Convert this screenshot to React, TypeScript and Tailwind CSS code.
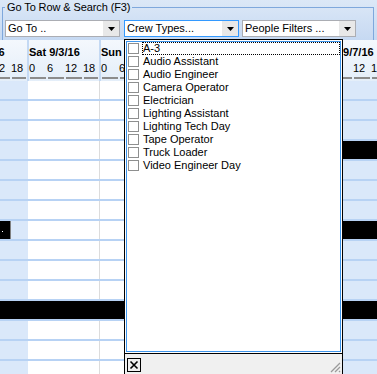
import React from "react";

const crewTypes = [
  "A-3",
  "Audio Assistant",
  "Audio Engineer",
  "Camera Operator",
  "Electrician",
  "Lighting Assistant",
  "Lighting Tech Day",
  "Tape Operator",
  "Truck Loader",
  "Video Engineer Day",
];

// visible days of the schedule, scrolled so Fri 9/2 is mostly off screen
const days = [
  { label: "Fri 9/2/16", body: "bg-[#dae8fa] border-l-[#dae8fa]", text: "" },
  { label: "Sat 9/3/16", body: "bg-white border-l-[#dae8fa]", text: "" },
  { label: "Sun 9/4/16", body: "bg-white border-l-[#dcdcdc]", text: "" },
  // Mon and Tue sit entirely under the open dropdown
  { label: "Mon 9/5/16", body: "bg-white border-l-[#dcdcdc]", text: "invisible" },
  { label: "Tue 9/6/16", body: "bg-white border-l-[#dcdcdc]", text: "invisible" },
  { label: "Wed 9/7/16", body: "bg-[#dae8fa] border-l-[#dcdcdc]", text: "" },
];

const hours = [
  { h: "0", w: "w-[18px]" },
  { h: "6", w: "w-[18px]" },
  { h: "12", w: "w-[18px]" },
  { h: "18", w: "w-[16px]" },
];

// which rows carry booked (black) blocks
const rows = Array.from({ length: 15 }, (_, i) => i);
const rightBars = [3, 7, 11];

function Arrow() {
  return (
    <svg width="7" height="4" viewBox="0 0 7 4">
      <polygon points="0,0 7,0 3.5,4" fill="#000" />
    </svg>
  );
}

function Combo({ text, className }: { text: string; className: string }) {
  return (
    <div className={`flex h-[17px] shrink-0 border bg-white ${className}`}>
      <span className="flex-1 truncate pl-[2px] text-[11px] leading-[15px] text-black">{text}</span>
      <span className="flex w-[16px] items-center justify-center bg-[#e8e8e8]">
        <Arrow />
      </span>
    </div>
  );
}

export default function App() {
  return (
    <div className="relative h-[374px] w-[377px] overflow-hidden bg-white font-['Liberation_Sans',Arial,sans-serif] text-black">
      {/* Search panel */}
      <div className="h-[40px] overflow-hidden bg-gradient-to-b from-[#dce8f7] to-[#c6d9f2]">
        <fieldset className="ml-[2px] h-[60px] w-[372px] border border-[#7fa8dc]">
          <legend className="ml-[2px] px-[2px] text-[11px] leading-[14px] tracking-[-0.1px]">
            Go To Row &amp; Search (F3)
          </legend>
          <div className="flex pl-[2px] pt-[6px]">
            <Combo text="Go To .." className="w-[115px] border-[#abadb3]" />
            <Combo text="Crew Types..." className="ml-[4px] w-[115px] border-[#3399ff]" />
            <Combo text="People Filters ..." className="ml-[3px] w-[114px] border-[#abadb3]" />
          </div>
        </fieldset>
      </div>

      {/* Timeline header */}
      <div className="h-[41px] overflow-hidden bg-gradient-to-b from-[#f4f8fd] to-[#e4eef9]">
        <div className="-ml-[45px] flex h-full">
          {days.map((d) => (
            <div key={d.label} className="w-[72px] shrink-0 border-l-2 border-[#c4d9f3]">
              <div className={`pt-[6px] text-[11px] font-bold leading-[13px] whitespace-nowrap ${d.text}`}>{d.label}</div>
              <div className={`mt-[3px] flex text-[11px] leading-[13px] ${d.text}`}>
                {hours.map((h) => (
                  <span key={h.h} className={`${h.w} shrink-0`}>
                    {h.h}
                  </span>
                ))}
              </div>
              <div className="mt-[2px] flex">
                {hours.map((h) => (
                  <span key={h.h} className={`${h.w} shrink-0 px-[1px]`}>
                    <span className="block h-[2px] bg-[#8c8c8c]" />
                  </span>
                ))}
              </div>
            </div>
          ))}
        </div>
      </div>

      {/* Timeline body */}
      <div>
        {rows.map((r) => (
          <div key={r} className="relative h-[20px] border-b-2 border-[#b7d2f4]">
            <div className="-ml-[45px] flex h-full">
              {days.map((d) => (
                <div key={d.label} className={`h-full w-[72px] shrink-0 border-l ${d.body}`} />
              ))}
            </div>
            {rightBars.includes(r) && (
              <div className="absolute left-[320px] right-0 top-0 h-[18px] bg-black" />
            )}
            {r === 7 && (
              <div className="absolute left-0 top-0 h-[18px] w-[11px] border-r border-[#808080] bg-black">
                <span className="absolute left-[2px] top-[10px] h-[1px] w-[1px] bg-white" />
              </div>
            )}
            {r === 11 && <div className="absolute left-0 right-0 top-0 h-[18px] bg-black" />}
          </div>
        ))}
      </div>

      {/* Crew Types dropdown */}
      <div className="absolute left-[124px] top-[39px] flex h-[335px] w-[219px] flex-col border-x border-t border-black bg-white">
        <div className="flex-1 p-[1px]">
          <div className="h-full border border-[#3d95ec] bg-white">
            {crewTypes.map((c, i) => (
              <div key={c} className="flex h-[13px] items-center">
                <span className="ml-[1px] h-[11px] w-[11px] shrink-0 border border-[#8e8f8f] bg-white" />
                <span
                  className={`ml-[3px] h-[13px] flex-1 border text-[11px] leading-[11px] whitespace-nowrap ${
                    i === 0 ? "border-dotted border-black" : "border-transparent"
                  }`}
                >
                  {c}
                </span>
              </div>
            ))}
          </div>
        </div>
        <div className="relative h-[21px] border-t border-black bg-[#f0f0f0]">
          <div className="ml-[2px] mt-[4px] flex h-[14px] w-[14px] items-center justify-center border border-black">
            <svg width="10" height="10" viewBox="0 0 10 10">
              <path d="M1.5 1.5 L8.5 8.5 M8.5 1.5 L1.5 8.5" stroke="#000" strokeWidth="1.6" />
            </svg>
          </div>
          <svg className="absolute bottom-[1px] right-[1px]" width="12" height="12" viewBox="0 0 12 12">
            <path d="M11 2 L2 11 M11 6 L6 11 M11 10 L10 11" stroke="#9a9a9a" strokeWidth="1.3" />
          </svg>
        </div>
      </div>
    </div>
  );
}
